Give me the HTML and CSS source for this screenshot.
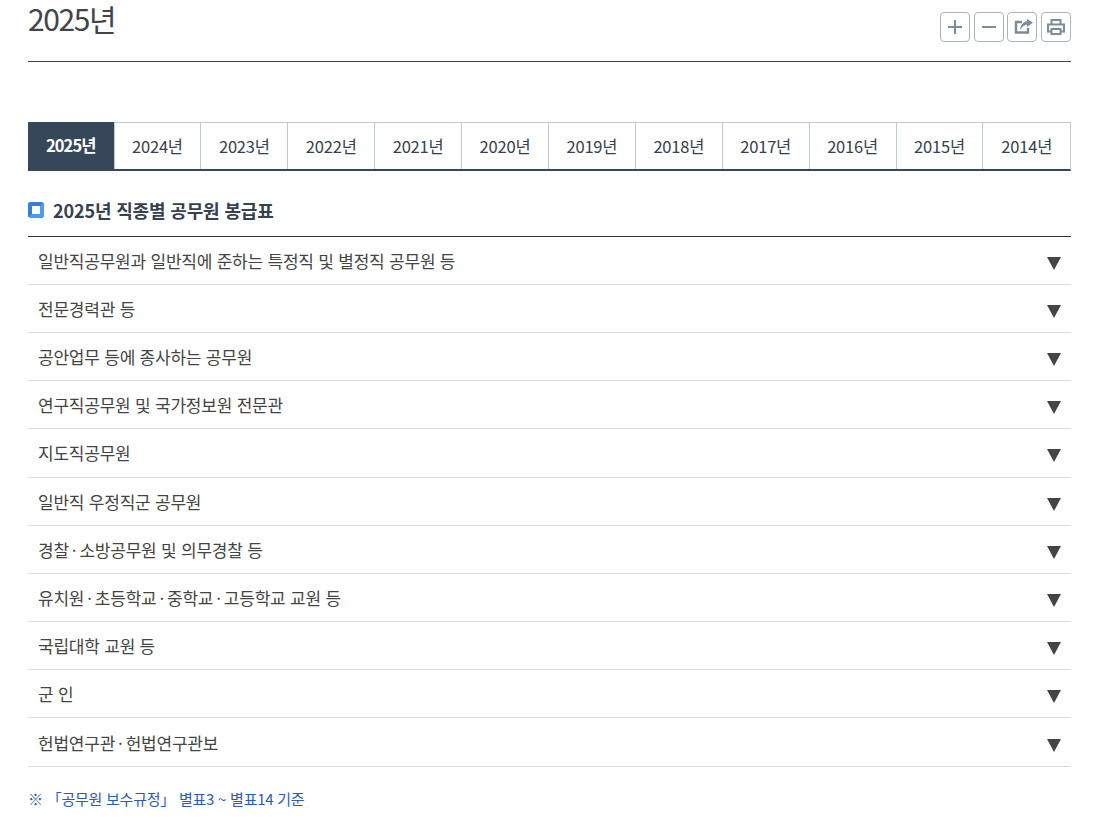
FILE: index.html
```html
<!DOCTYPE html>
<html lang="ko">
<head>
    <meta charset="UTF-8">
    <title>2025년 봉급표</title>
    <link rel="stylesheet" href="styles.css">
</head>
<body>
    <div class="page">
        <div class="top">
            <h1>2025년</h1>
            <div class="tools">
                <button class="tool" type="button"><svg width="18" height="18" viewBox="0 0 18 18"><path d="M9 2v14M2 9h14" stroke="#7c8c99" stroke-width="2" fill="none"/></svg></button>
                <button class="tool" type="button"><svg width="18" height="18" viewBox="0 0 18 18"><path d="M2 9h14" stroke="#7c8c99" stroke-width="2" fill="none"/></svg></button>
                <button class="tool" type="button"><svg width="24" height="18" viewBox="0 0 24 18"><path d="M12 4H6v10.500h12V10" stroke="#7c8c99" stroke-width="2.400" fill="none"/><path d="M10 12c.5-5 3-8 7-9V1l6 3.500L17 9V6.500c-3 .5-5 2.500-7 5.500z" fill="#7c8c99"/></svg></button>
                <button class="tool" type="button"><svg width="20" height="18" viewBox="0 0 20 18"><path d="M5.500 6V2h9v4M5 13.500H2V6.500h16v7h-3" stroke="#7c8c99" stroke-width="2" fill="none"/><path d="M5.500 11h9v5h-9z" stroke="#7c8c99" stroke-width="2" fill="none"/></svg></button>
            </div>
        </div>

        <ul class="tabs">
            <li class="on">2025년</li>
            <li>2024년</li>
            <li>2023년</li>
            <li>2022년</li>
            <li>2021년</li>
            <li>2020년</li>
            <li>2019년</li>
            <li>2018년</li>
            <li>2017년</li>
            <li>2016년</li>
            <li>2015년</li>
            <li>2014년</li>
        </ul>

        <h2 class="sub"><span class="mark"></span>2025년 직종별 공무원 봉급표</h2>

        <ul class="list">
            <li><span>일반직공무원과 일반직에 준하는 특정직 및 별정직 공무원 등</span><i class="arrow"></i></li>
            <li><span>전문경력관 등</span><i class="arrow"></i></li>
            <li><span>공안업무 등에 종사하는 공무원</span><i class="arrow"></i></li>
            <li><span>연구직공무원 및 국가정보원 전문관</span><i class="arrow"></i></li>
            <li><span>지도직공무원</span><i class="arrow"></i></li>
            <li><span>일반직 우정직군 공무원</span><i class="arrow"></i></li>
            <li><span>경찰<b class="dot">·</b>소방공무원 및 의무경찰 등</span><i class="arrow"></i></li>
            <li><span>유치원<b class="dot">·</b>초등학교<b class="dot">·</b>중학교<b class="dot">·</b>고등학교 교원 등</span><i class="arrow"></i></li>
            <li><span>국립대학 교원 등</span><i class="arrow"></i></li>
            <li><span>군 인</span><i class="arrow"></i></li>
            <li><span>헌법연구관<b class="dot">·</b>헌법연구관보</span><i class="arrow"></i></li>
        </ul>

        <p class="note">※ 「공무원 보수규정」 별표3 ~ 별표14 기준</p>
    </div>
</body>
</html>
```

FILE: styles.css
```css
* {
    box-sizing: border-box;
}
body {
    margin: 0;
    background: #fff;
    font-family: "Noto Sans CJK KR", "Noto Sans", sans-serif;
    color: #444;
}
.page {
    width: 1043px;
    margin-left: 28px;
}
.top {
    display: flex;
    justify-content: space-between;
    height: 62px;
    border-bottom: 1px solid #3c4650;
}
h1 {
    margin: 0;
    font-size: 30px;
    line-height: 36px;
    font-weight: 400;
    letter-spacing: -1.400px;
    color: #444;
}
.tools {
    display: flex;
    gap: 3.670px;
    padding-top: 12px;
}
.tool {
    width: 30px;
    height: 30px;
    padding: 0;
    display: flex;
    align-items: center;
    justify-content: center;
    background: #fff;
    border: 1px solid #a6b4c0;
    border-radius: 4px;
}
.tabs {
    display: grid;
    grid-template-columns: 85.500px repeat(10, 86.900px) 1fr;
    margin: 60px 0 0;
    padding: 0;
    list-style: none;
    height: 49px;
    border-top: 1px solid #bdc9d5;
    border-bottom: 2px solid #36475a;
    border-right: 1px solid #bdc9d5;
}
.tabs li {
    text-align: center;
    font-size: 16.500px;
    line-height: 46px;
    letter-spacing: -0.200px;
    color: #36404e;
    border-left: 1px solid #bdc9d5;
}
.tabs li.on {
    margin-top: -1px;
    line-height: 47px;
    background: #36475a;
    border-left: 0;
    color: #fff;
    font-weight: 700;
    letter-spacing: -0.900px;
}
.sub {
    display: flex;
    align-items: center;
    margin: 25px 0 0;
    height: 28px;
    font-size: 18px;
    font-weight: 700;
    letter-spacing: -0.150px;
    color: #36404e;
}
.mark {
    width: 16px;
    height: 16px;
    margin-right: 9px;
    border: 4.500px solid #3a7fd5;
    border-right-color: #4b9af5;
    border-bottom-color: #4b9af5;
    border-radius: 3px;
    background: #fff;
}
.list {
    margin: 11.760px 0 0;
    padding: 0;
    list-style: none;
    border-top: 1px solid #333;
}
.list li {
    display: flex;
    align-items: center;
    justify-content: space-between;
    height: 48.160px;
    padding: 0 10px 0.080px 10px;
    font-size: 17px;
    letter-spacing: -0.220px;
    color: #444;
    border-bottom: 1px solid #ddd;
}
.list li:last-child {
    height: 48.600px;
}
.dot {
    margin: 0 3px;
    font-weight: 400;
}
.arrow {
    width: 0;
    height: 0;
    margin-top: 6px;
    border-left: 7px solid transparent;
    border-right: 7px solid transparent;
    border-top: 13px solid #444;
}
.note {
    margin: 19.900px 0 0;
    font-size: 15px;
    line-height: 24px;
    letter-spacing: -0.250px;
    color: #2b5bb5;
}
```
